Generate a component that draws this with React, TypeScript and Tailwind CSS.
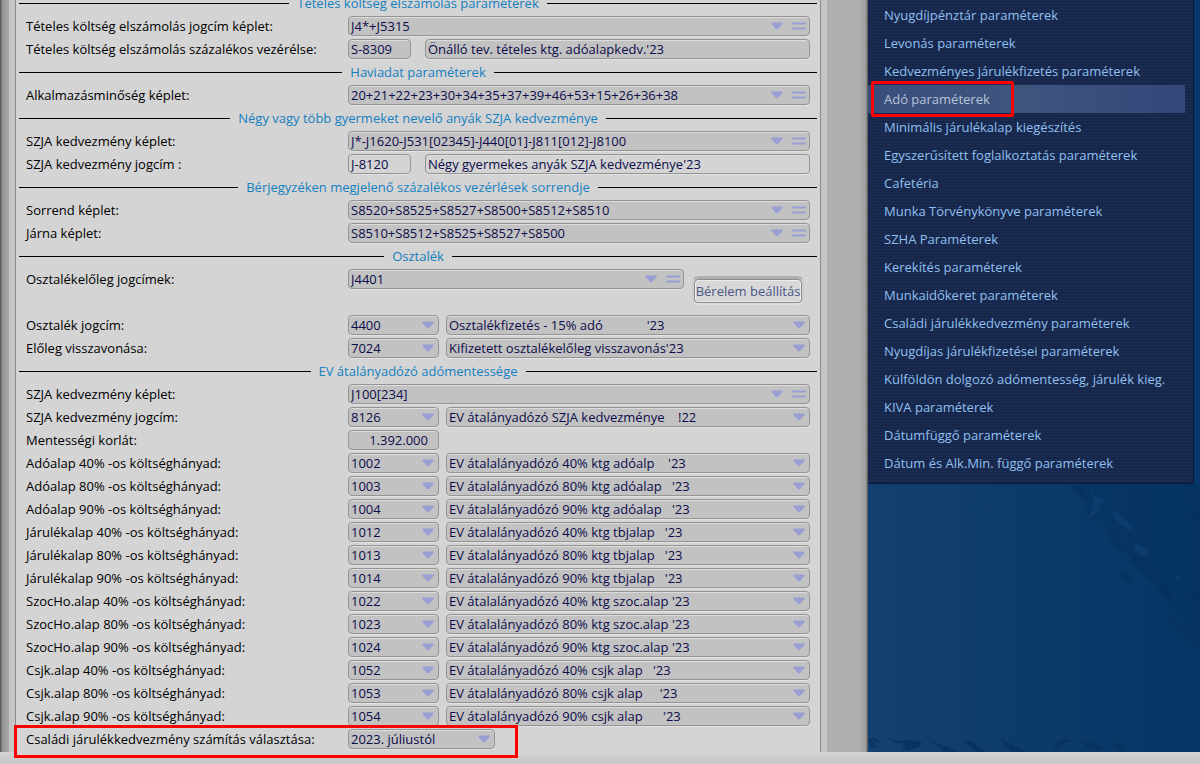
type Row =
  | { kind: "heading"; text: string }
  | { kind: "formula"; label: string; value: string }
  | { kind: "formulaButton"; label: string; value: string; action: string }
  | { kind: "code"; label: string; value: string; name: string; editable?: boolean }
  | { kind: "pair"; label: string; value: string; name: string }
  | { kind: "amount"; label: string; value: string };

const pad = (text: string) => text.replace(/ {2,}/g, (m) => "\u00a0".repeat(m.length));

const ROWS: Row[] = [
  { kind: "heading", text: "Tételes költség elszámolás paraméterek" },
  { kind: "formula", label: "Tételes költség elszámolás jogcím képlet:", value: "J4*+J5315" },
  { kind: "code", label: "Tételes költség elszámolás százalékos vezérélse:", value: "S-8309", name: "Önálló tev. tételes ktg. adóalapkedv.'23" },
  { kind: "heading", text: "Haviadat paraméterek" },
  { kind: "formula", label: "Alkalmazásminőség képlet:", value: "20+21+22+23+30+34+35+37+39+46+53+15+26+36+38" },
  { kind: "heading", text: "Négy vagy több gyermeket nevelő anyák SZJA kedvezménye" },
  { kind: "formula", label: "SZJA kedvezmény képlet:", value: "J*-J1620-J531[02345]-J440[01]-J811[012]-J8100" },
  { kind: "code", label: "SZJA kedvezmény jogcím :", value: "J-8120", name: "Négy gyermekes anyák SZJA kedvezménye'23", editable: true },
  { kind: "heading", text: "Bérjegyzéken megjelenő százalékos vezérlések sorrendje" },
  { kind: "formula", label: "Sorrend képlet:", value: "S8520+S8525+S8527+S8500+S8512+S8510" },
  { kind: "formula", label: "Járna képlet:", value: "S8510+S8512+S8525+S8527+S8500" },
  { kind: "heading", text: "Osztalék" },
  { kind: "formulaButton", label: "Osztalékelőleg jogcímek:", value: "J4401", action: "Bérelem beállítás" },
  { kind: "pair", label: "Osztalék jogcím:", value: "4400", name: "Osztalékfizetés - 15% adó             '23" },
  { kind: "pair", label: "Előleg visszavonása:", value: "7024", name: "Kifizetett osztalékelőleg visszavonás'23" },
  { kind: "heading", text: "EV átalányadózó adómentessége" },
  { kind: "formula", label: "SZJA kedvezmény képlet:", value: "J100[234]" },
  { kind: "pair", label: "SZJA kedvezmény jogcím:", value: "8126", name: "EV átalányadózó SZJA kedvezménye    !22" },
  { kind: "amount", label: "Mentességi korlát:", value: "1.392.000" },
  { kind: "pair", label: "Adóalap 40% -os költséghányad:", value: "1002", name: "EV átalalányadózó 40% ktg adóalp    '23" },
  { kind: "pair", label: "Adóalap 80% -os költséghányad:", value: "1003", name: "EV átalalányadózó 80% ktg adóalap   '23" },
  { kind: "pair", label: "Adóalap 90% -os költséghányad:", value: "1004", name: "EV átalalányadózó 90% ktg adóalap   '23" },
  { kind: "pair", label: "Járulékalap 40% -os költséghányad:", value: "1012", name: "EV átalalányadózó 40% ktg tbjalap   '23" },
  { kind: "pair", label: "Járulékalap 80% -os költséghányad:", value: "1013", name: "EV átalalányadózó 80% ktg tbjalap   '23" },
  { kind: "pair", label: "Járulékalap 90% -os költséghányad:", value: "1014", name: "EV átalalányadózó 90% ktg tbjalap   '23" },
  { kind: "pair", label: "SzocHo.alap 40% -os költséghányad:", value: "1022", name: "EV átalalányadózó 40% ktg szoc.alap '23" },
  { kind: "pair", label: "SzocHo.alap 80% -os költséghányad:", value: "1023", name: "EV átalalányadózó 80% ktg szoc.alap '23" },
  { kind: "pair", label: "SzocHo.alap 90% -os költséghányad:", value: "1024", name: "EV átalalányadózó 90% ktg szoc.alap '23" },
  { kind: "pair", label: "Csjk.alap 40% -os költséghányad:", value: "1052", name: "EV átalalányadózó 40% csjk alap   '23" },
  { kind: "pair", label: "Csjk.alap 80% -os költséghányad:", value: "1053", name: "EV átalalányadózó 80% csjk alap     '23" },
  { kind: "pair", label: "Csjk.alap 90% -os költséghányad:", value: "1054", name: "EV átalalányadózó 90% csjk alap      '23" },
];

const MENU = [
  "Nyugdíjpénztár paraméterek",
  "Levonás paraméterek",
  "Kedvezményes járulékfizetés paraméterek",
  "Adó paraméterek",
  "Minimális járulékalap kiegészítés",
  "Egyszerűsített foglalkoztatás paraméterek",
  "Cafetéria",
  "Munka Törvénykönyve paraméterek",
  "SZHA Paraméterek",
  "Kerekítés paraméterek",
  "Munkaidőkeret paraméterek",
  "Családi járulékkedvezmény paraméterek",
  "Nyugdíjas járulékfizetései paraméterek",
  "Külföldön dolgozó adómentesség, járulék kieg.",
  "KIVA paraméterek",
  "Dátumfüggő paraméterek",
  "Dátum és Alk.Min. függő paraméterek",
];

const ACTIVE = "Adó paraméterek";

const FIELD =
  "h-5 rounded border border-[#949494] text-[#0c0c4a] shadow-[inset_0_1px_0_#dcdcdc,0_1px_0_#e2e2e2]";

function Arrow() {
  return (
    <svg className="h-2 w-3 shrink-0" viewBox="0 0 12 8">
      <path d="M1 0.5h10q1.3 0.3 0.6 1.4L7 7.1q-1 0.9-2 0L0.4 1.9q-0.7-1.1 0.6-1.4z" fill="#999fd2" />
    </svg>
  );
}

function Equals() {
  return (
    <svg className="h-2 w-3.5 shrink-0" viewBox="0 0 14 8">
      <path d="M1 1.5h12M1 6.5h12" stroke="#999fd2" strokeWidth="2" strokeLinecap="round" />
    </svg>
  );
}

function FormulaField({ id, value }: { id: string; value: string }) {
  return (
    <div className={`${FIELD} flex min-w-0 flex-1 items-center bg-[#c2c2c2] pl-0.5 pr-[3px]`}>
      <input id={id} defaultValue={value} className="h-full min-w-0 flex-1 bg-transparent outline-none" />
      <button type="button" aria-label="Lista" className="flex">
        <Arrow />
      </button>
      <button type="button" aria-label="Képlet" className="ml-[9px] flex">
        <Equals />
      </button>
    </div>
  );
}

function SelectField({ id, value, label, className }: { id: string; value: string; label?: string; className: string }) {
  return (
    <div className={`grid min-w-0 items-center ${className}`}>
      <select
        id={id}
        aria-label={label}
        className={`${FIELD} col-start-1 row-start-1 w-full appearance-none bg-[#c2c2c2] pl-0.5 pr-5 leading-[18px] outline-none`}
      >
        <option>{pad(value)}</option>
      </select>
      <span className="pointer-events-none col-start-1 row-start-1 mr-[5px] flex justify-self-end">
        <Arrow />
      </span>
    </div>
  );
}

function Heading({ text }: { text: string }) {
  return (
    <div className="flex h-5 items-center gap-2 pl-0.5 pr-[3px]">
      <span className="h-px flex-1 bg-black" />
      <h2 className="text-[#1580c0]">{text}</h2>
      <span className="h-px flex-1 bg-black" />
    </div>
  );
}

function FormRow({ row, id }: { row: Row; id: string }) {
  if (row.kind === "heading") return <Heading text={row.text} />;
  return (
    <div className={`flex items-start pl-[9px] pr-2.5 ${row.kind === "formulaButton" ? "h-[43px]" : "h-5"}`}>
      <label htmlFor={id} className="w-[322px] shrink-0 text-black">
        {row.label}
      </label>
      {row.kind === "formula" && <FormulaField id={id} value={row.value} />}
      {row.kind === "formulaButton" && (
        <>
          <FormulaField id={id} value={row.value} />
          <div className="ml-2 mr-1.5 mt-[7px] rounded-md border-2 border-t-[3px] border-[#cccccc] border-b-[#dedede] border-t-[#b0b0b0]">
            <button
              type="button"
              className="block h-6 w-[108px] rounded border border-[#8c8c8c] bg-[#d8d8d8] text-[#4c5688] shadow-[inset_0_0_0_1px_#ececec]"
            >
              {row.action}
            </button>
          </div>
        </>
      )}
      {row.kind === "code" && (
        <>
          <input
            id={id}
            defaultValue={row.value}
            className={`${FIELD} w-[63px] pl-0.5 outline-none ${row.editable ? "bg-[#d4d4d4]" : "bg-[#c2c2c2]"}`}
          />
          <input
            aria-label="Megnevezés"
            defaultValue={row.name}
            className={`${FIELD} ml-3.5 min-w-0 flex-1 pl-0.5 outline-none ${row.editable ? "bg-[#d4d4d4]" : "bg-[#c2c2c2]"}`}
          />
        </>
      )}
      {row.kind === "pair" && (
        <>
          <SelectField id={id} value={row.value} className="w-[91px]" />
          <SelectField id={`${id}-name`} value={row.name} label="Megnevezés" className="ml-[7px] flex-1" />
        </>
      )}
      {row.kind === "amount" && (
        <input id={id} defaultValue={row.value} className={`${FIELD} w-[91px] bg-[#c2c2c2] pr-2.5 text-right outline-none`} />
      )}
    </div>
  );
}

function Wallpaper() {
  return (
    <svg className="absolute inset-0 h-full w-full" viewBox="0 0 332 269" preserveAspectRatio="none">
      <path
        d="M203 0l10 12 8 14 14 10 8 14 16 12 8 16 16 12 10 18 14 16 16 14 9 12V0z"
        fill="#04305f"
        opacity="0.35"
      />
      <g fill="#05315f" opacity="0.7">
        <path d="M204 1l7 1 7 9 3 8-7-5-9-8zM216 26l10 4 5 7-8-2zM238 44l10 6 6 10 10 7-3 5-11-7-9-11zM262 70l12 8 9 8 12 14 8 12 3 10-10-9-8-12-14-12-10-10zM252 86l8 5 4 8-9-6zM300 130l9 5 10 15 6 10-13-10-12-12z" />
        <path d="M318 5l7 2 3 12-5-1-4-7zM320 24l7 4 5 8v5l-9-8zM322 108l10 5v8l-8-5zM318 138l14 12v14l-10-12z" />
      </g>
      <g fill="#16457a" opacity="0.4">
        <path d="M222 4l5 8 12 3-5 4-3 8-7 6-5 1 5-8 2-8zM245 27l7 3 13 13-2 4-10-6-6-6zM266 59l10 5 5 6-6 3-7-5zM290 78l4 4-3 1zM306 88l7 7-4 1z" />
      </g>
      <g fill="#062f5c" opacity="0.7">
        <path d="M0 256q9-3 12 4-4-3-8-2 2 4 6 6-6 2-8-1zM19 254l10 4 13-1 12 2-2 5-14 4-4-4 4-2-10-2zM60 256l10 5 10 3 10 5h-14l-6-6zM96 257l7 1 10 7 4 4h-9l-8-7zM132 256l8 3 12 7 6 3h-14l-8-7zM186 262q8-8 18-4-8 0-10 5l-6 2zM210 257l14 3 12 6-6 2-10-4zM244 259l8 2 4 5-8-2z" />
      </g>
    </svg>
  );
}

export default function App() {
  return (
    <div className="flex min-h-screen flex-col overflow-hidden bg-[#d0d0d0] font-['Open_Sans','Noto_Sans',sans-serif] text-[13px] leading-5">
      <div className="flex flex-1">
        <form className="flex min-w-0 flex-1 bg-[#afafaf]">
          <div className="w-[9px] bg-linear-to-r from-[#4c4c4c] via-[#929292] via-25% to-[#a8a8a8]" />
          <div className="min-w-0 flex-1 border-r-[6px] border-l-[6px] border-[#c6c6c6]">
            <div className="-mt-[7px] flex flex-col gap-[3px] border-x border-[#8a8a8a] bg-[#d4d4d4] pb-[3px] pl-px">
              {ROWS.map((row, i) => (
                <FormRow key={i} row={row} id={`field-${i}`} />
              ))}
              <div className="relative flex items-start pl-[9px]">
                <label htmlFor="family-discount" className="w-[322px] shrink-0 text-black">
                  Családi járulékkedvezmény számítás választása:
                </label>
                <SelectField id="family-discount" value="2023. júliustól" className="w-[147px]" />
                {/* Highlight */}
                <div className="pointer-events-none absolute -top-1 -left-[3px] h-[33px] w-[504px] border-3 border-[#ff0000]" />
              </div>
            </div>
          </div>
          <div className="w-[41px] bg-linear-to-r from-[#afafaf] from-80% via-[#9c9c9c] via-95% to-[#505050]" />
        </form>

        <aside className="flex w-[332px] shrink-0 flex-col bg-[#05376a]">
          <nav className="mr-1.5 border-r border-b border-[#0b1740] bg-[repeating-linear-gradient(#1c2d54_0_1px,#17264b_1px_3px)] pt-px pb-1.5">
            <ul>
              {MENU.map((item) => (
                <li
                  key={item}
                  className={`relative mr-2 h-7 ${item === ACTIVE ? "bg-linear-to-r from-[#3a4e7c] via-[#3e557e] to-[#34467a]" : ""}`}
                >
                  <a
                    href="#"
                    className={`block pl-4 leading-7 ${item === ACTIVE ? "text-[#b8c4d8]" : "text-[#8fc0ee]"}`}
                  >
                    {item}
                  </a>
                  {item === ACTIVE && (
                    <div className="pointer-events-none absolute -top-1 left-[3px] h-9 w-[143px] rounded-xs border-3 border-[#ff0000]" />
                  )}
                </li>
              ))}
            </ul>
          </nav>
          <div className="relative flex-1 bg-linear-to-r from-[#12416f] to-[#053565]">
            <Wallpaper />
          </div>
        </aside>
      </div>
      <footer className="h-3 bg-linear-to-b from-[#d4d4d4] to-[#c6c6c6]" />
    </div>
  );
}
